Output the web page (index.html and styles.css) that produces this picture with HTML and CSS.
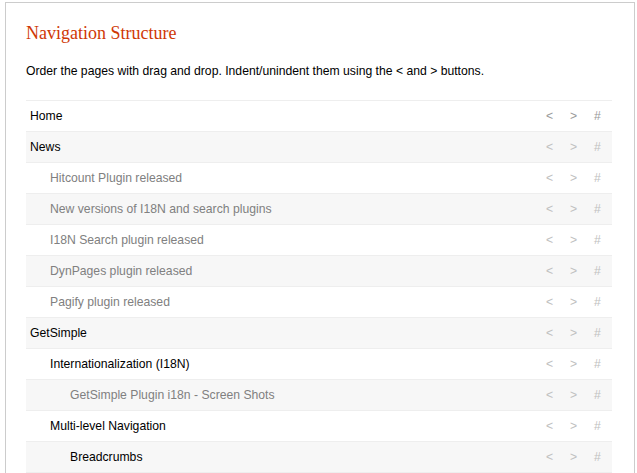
FILE: index.html
```html
<!DOCTYPE html>
<html lang="en">
<head>
  <meta charset="UTF-8">
  <title>Navigation Structure</title>
  <link rel="stylesheet" href="styles.css">
</head>
<body>
  <div class="main">
    <h3>Navigation Structure</h3>
    <p class="intro">Order the pages with drag and drop. Indent/unindent them using the &lt; and &gt; buttons.</p>

    <ul id="navi-list">
      <li class="lvl0 first"><span class="title">Home</span><span class="actions"><a>&lt;</a><a>&gt;</a><a>#</a></span></li>
      <li class="lvl0"><span class="title">News</span><span class="actions"><a>&lt;</a><a>&gt;</a><a>#</a></span></li>
      <li class="lvl1 nomenu"><span class="title">Hitcount Plugin released</span><span class="actions"><a>&lt;</a><a>&gt;</a><a>#</a></span></li>
      <li class="lvl1 nomenu"><span class="title">New versions of I18N and search plugins</span><span class="actions"><a>&lt;</a><a>&gt;</a><a>#</a></span></li>
      <li class="lvl1 nomenu"><span class="title">I18N Search plugin released</span><span class="actions"><a>&lt;</a><a>&gt;</a><a>#</a></span></li>
      <li class="lvl1 nomenu"><span class="title">DynPages plugin released</span><span class="actions"><a>&lt;</a><a>&gt;</a><a>#</a></span></li>
      <li class="lvl1 nomenu"><span class="title">Pagify plugin released</span><span class="actions"><a>&lt;</a><a>&gt;</a><a>#</a></span></li>
      <li class="lvl0"><span class="title">GetSimple</span><span class="actions"><a>&lt;</a><a>&gt;</a><a>#</a></span></li>
      <li class="lvl1"><span class="title">Internationalization (I18N)</span><span class="actions"><a>&lt;</a><a>&gt;</a><a>#</a></span></li>
      <li class="lvl2 nomenu"><span class="title">GetSimple Plugin i18n - Screen Shots</span><span class="actions"><a>&lt;</a><a>&gt;</a><a>#</a></span></li>
      <li class="lvl1"><span class="title">Multi-level Navigation</span><span class="actions"><a>&lt;</a><a>&gt;</a><a>#</a></span></li>
      <li class="lvl2"><span class="title">Breadcrumbs</span><span class="actions"><a>&lt;</a><a>&gt;</a><a>#</a></span></li>
    </ul>
  </div>
</body>
</html>
```

FILE: styles.css
```css
html, body {
  margin: 0;
  background: #fff;
  font-family: "Liberation Sans", Arial, sans-serif;
  font-size: 12.2px;
  color: #000;
}
.main {
  margin: 2px 2px 0 5px;
  border: 1px solid #ccc;
  border-bottom: none;
  padding: 18px 22px 0 20px;
}
.main h3 {
  font-family: "Liberation Serif", Georgia, serif;
  font-weight: normal;
  font-size: 18px;
  color: #cf3805;
  margin: 0 0 18px 0;
  line-height: 24px;
}
.intro {
  margin: 0 0 21px 0;
  line-height: 16px;
}
#navi-list {
  list-style: none;
  margin: 0;
  padding: 0;
  border-top: 1px solid #eee;
}
#navi-list li {
  display: flex;
  align-items: center;
  height: 30px;
  border-bottom: 1px solid #eee;
  padding: 0 10px 0 4px;
}
#navi-list li:nth-child(even) {
  background: #f7f7f7;
}
#navi-list li.lvl1 { padding-left: 24px; }
#navi-list li.lvl2 { padding-left: 44px; }
#navi-list li.nomenu .title { color: #808080; }
.title {
  flex: 1;
}
.actions {
  display: flex;
  gap: 15px;
}
.actions a {
  width: 9px;
  text-align: center;
  color: #c0c0c0;
}
#navi-list li.first .actions a {
  color: #9a9a9a;
}
```
